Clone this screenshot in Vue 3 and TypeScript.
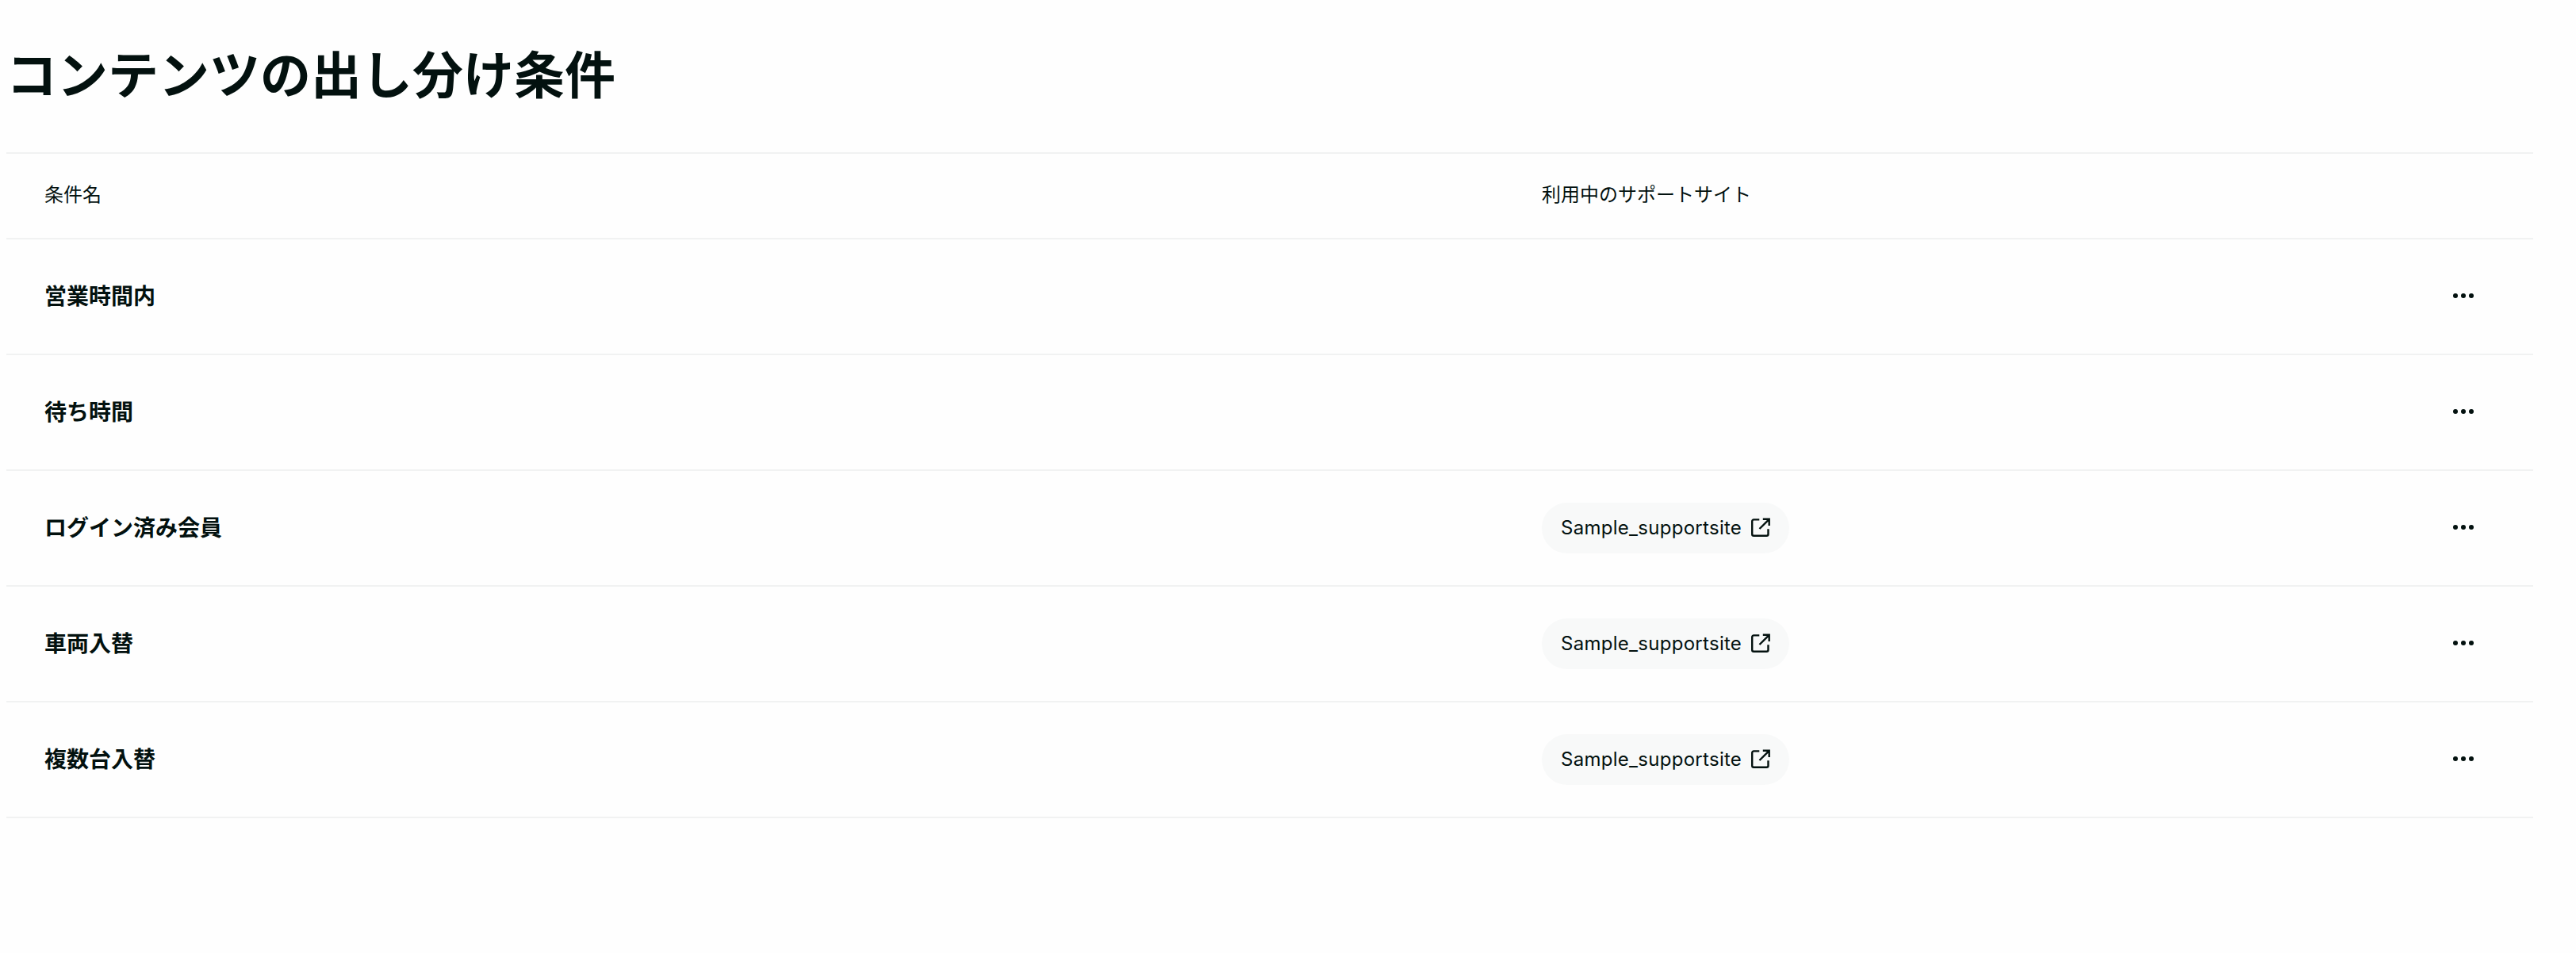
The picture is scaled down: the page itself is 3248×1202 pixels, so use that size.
<script setup lang="ts">
interface Condition {
  name: string
  site?: string
}

const conditions: Condition[] = [
  { name: '営業時間内' },
  { name: '待ち時間' },
  { name: 'ログイン済み会員', site: 'Sample_supportsite' },
  { name: '車両入替', site: 'Sample_supportsite' },
  { name: '複数台入替', site: 'Sample_supportsite' },
]
</script>

<template>
  <main class="page">
    <h1 class="title">コンテンツの出し分け条件</h1>
    <section class="table">
      <div class="row head">
        <span class="name">条件名</span>
        <span class="sites">利用中のサポートサイト</span>
      </div>
      <div v-for="c in conditions" :key="c.name" class="row">
        <span class="name">{{ c.name }}</span>
        <div class="sites">
          <a v-if="c.site" class="chip">
            <span class="chip-text">{{ c.site }}</span>
            <svg class="ext" width="24" height="24" viewBox="0 0 24 24" fill="none" stroke="currentColor" stroke-width="2.4">
              <path d="M10.3 1.4H3.2a2 2 0 0 0-2 2v16.4a2 2 0 0 0 2 2h16.3a2 2 0 0 0 2-2V13.2" />
              <path d="M14.8 0.8h7.9v8.2M22.7 0.8L10.5 13" />
            </svg>
          </a>
        </div>
        <button class="more" type="button" aria-label="メニュー">
          <svg width="26" height="6" viewBox="0 0 26 6" fill="currentColor">
            <circle cx="3" cy="3" r="3" />
            <circle cx="13" cy="3" r="3" />
            <circle cx="23" cy="3" r="3" />
          </svg>
        </button>
      </div>
    </section>
  </main>
</template>

<style>
body {
  background: #fefefe;
}
</style>

<style scoped>
.page {
  box-sizing: border-box;
  height: 1202px;
  padding: 0 54px 0 8px;
  background: #fefefe;
  color: #03110f;
  font-family: Inter, "Noto Sans CJK JP", sans-serif;
}
.title {
  box-sizing: border-box;
  margin: 0;
  height: 192px;
  padding-bottom: 11px;
  line-height: 181px;
  font-family: "Noto Sans CJK JP", sans-serif;
  font-size: 64px;
  font-weight: 700;
}
.table {
  border-top: 2px solid #f1f2f2;
}
.row {
  box-sizing: border-box;
  display: flex;
  align-items: center;
  height: 146px;
  padding: 0 75px 0 48px;
  border-bottom: 2px solid #f1f2f2;
  font-family: "Noto Sans CJK JP", sans-serif;
}
.name {
  width: 1888px;
  padding-bottom: 4px;
  font-size: 28px;
  font-weight: 700;
}
.sites {
  flex: 1;
}
.head {
  height: 108px;
  padding-bottom: 8px;
  font-size: 24px;
}
.head .name {
  padding-bottom: 0;
  font-size: 24px;
  font-weight: 400;
}
.chip {
  box-sizing: border-box;
  display: flex;
  align-items: center;
  justify-content: space-between;
  width: 312px;
  height: 64px;
  padding: 0 24px;
  border-radius: 32px;
  background: #f8f9f9;
}
.chip-text {
  font-family: Inter, sans-serif;
  font-size: 24px;
  font-weight: 400;
  letter-spacing: 0.28px;
  line-height: 32px;
}
.ext {
  overflow: visible;
}
.more {
  display: flex;
  margin: 0;
  padding: 0 0 2px;
  border: 0;
  background: none;
  color: inherit;
}
</style>
